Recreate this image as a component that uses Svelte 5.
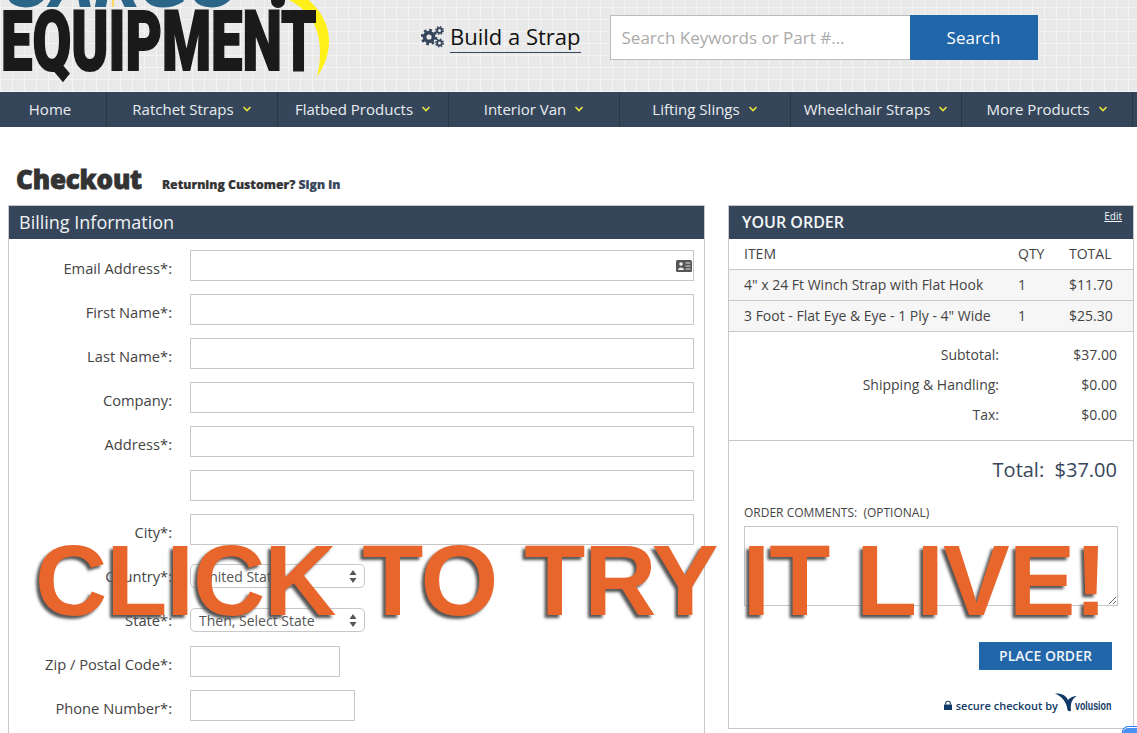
<script lang="ts">
	const navItems = [
		{ label: 'Home', caret: false },
		{ label: 'Ratchet Straps', caret: true },
		{ label: 'Flatbed Products', caret: true },
		{ label: 'Interior Van', caret: true },
		{ label: 'Lifting Slings', caret: true },
		{ label: 'Wheelchair Straps', caret: true },
		{ label: 'More Products', caret: true },
	];

	const cartLines = [
		{ name: '4" x 24 Ft Winch Strap with Flat Hook', qty: 1, total: '$11.70' },
		{ name: '3 Foot - Flat Eye & Eye - 1 Ply - 4" Wide', qty: 1, total: '$25.30' },
	];

	const summary = [
		{ label: 'Subtotal:', value: '$37.00' },
		{ label: 'Shipping & Handling:', value: '$0.00' },
		{ label: 'Tax:', value: '$0.00' },
	];
</script>

<div class="page">
	<header class="top">
		<div class="logo">
			<svg class="swoosh" width="340" height="92" viewBox="0 0 340 92">
				<path d="M285 -2 L306 -2 C322 10 330 28 329 44 C328 58 323 68 317 77 C321 60 322 40 314 24 C308 12 298 4 285 -2 Z" fill="#fff01a" />
				<ellipse cx="278" cy="1" rx="7" ry="7" fill="#1a1a1a" />
				<rect x="112" y="0" width="2" height="7" fill="#ffd860" />
			</svg>
			<span class="cargo">CARGO</span>
			<span class="equipment">EQUIPMENT</span>
		</div>

		<a class="build" href="#build">
			<svg width="24" height="22" viewBox="0 0 24 22" fill="none" stroke="#36465a">
				<circle cx="8" cy="11" r="4.4" stroke-width="3.6" />
				<circle cx="8" cy="11" r="7" stroke-width="2.6" stroke-dasharray="2.75 2.75" />
				<circle cx="18.5" cy="4.5" r="2.4" stroke-width="1.8" />
				<circle cx="18.5" cy="4.5" r="3.7" stroke-width="1.6" stroke-dasharray="1.5 1.4" />
				<circle cx="18.5" cy="17" r="2.4" stroke-width="1.8" />
				<circle cx="18.5" cy="17" r="3.7" stroke-width="1.6" stroke-dasharray="1.5 1.4" />
			</svg>
			<span class="build-text">Build a Strap</span>
		</a>

		<form class="search">
			<input type="text" placeholder="Search Keywords or Part #..." />
			<button type="button">Search</button>
		</form>
	</header>

	<nav class="nav">
		{#each navItems as item}
			<a class="nav-item" class:plain={!item.caret} href="#nav">
				{item.label}
				{#if item.caret}
					<svg width="10" height="6" viewBox="0 0 10 6" fill="none" stroke="#e9e63c" stroke-width="1.6">
						<path d="M1.5 1 L5 4.5 L8.5 1" />
					</svg>
				{/if}
			</a>
		{/each}
	</nav>

	<div class="heading">
		<h1>Checkout</h1>
		<span class="returning">Returning Customer? <a href="#signin">Sign in</a></span>
	</div>

	<main class="columns">
		<section class="panel billing">
			<h2 class="billing-title">Billing Information</h2>
			<div class="fields">
				<label class="row">
					<span>Email Address*:</span>
					<span class="email-wrap">
						<input type="text" />
						<svg class="card" width="16" height="12" viewBox="0 0 16 12">
							<rect width="16" height="12" rx="1.5" fill="#555" />
							<circle cx="5" cy="4" r="1.8" fill="#eee" />
							<path d="M2 10 C2 6.5 8 6.5 8 10 Z" fill="#eee" />
							<path d="M9.5 3h5M9.5 6h5M9.5 9h5" stroke="#ddd" stroke-width="1.2" />
						</svg>
					</span>
				</label>
				<label class="row"><span>First Name*:</span><input type="text" /></label>
				<label class="row"><span>Last Name*:</span><input type="text" /></label>
				<label class="row"><span>Company:</span><input type="text" /></label>
				<label class="row"><span>Address*:</span><input type="text" /></label>
				<label class="row"><span></span><input type="text" /></label>
				<label class="row"><span>City*:</span><input type="text" /></label>
				<div class="row">
					<span>Country*:</span>
					<div class="select">
						United States
						<svg width="8" height="13" viewBox="0 0 8 13" fill="#555"><path d="M4 0 L7.5 5 H0.5 Z M4 13 L7.5 8 H0.5 Z" /></svg>
					</div>
				</div>
				<div class="row">
					<span>State*:</span>
					<div class="select">
						Then, Select State
						<svg width="8" height="13" viewBox="0 0 8 13" fill="#555"><path d="M4 0 L7.5 5 H0.5 Z M4 13 L7.5 8 H0.5 Z" /></svg>
					</div>
				</div>
				<label class="row"><span>Zip / Postal Code*:</span><input class="zip" type="text" /></label>
				<label class="row"><span>Phone Number*:</span><input class="phone" type="text" /></label>
			</div>
		</section>

		<aside class="panel order">
			<div class="order-title">
				<h2>YOUR ORDER</h2>
				<a href="#edit">Edit</a>
			</div>
			<div class="line head">
				<span>ITEM</span><span>QTY</span><span>TOTAL</span>
			</div>
			{#each cartLines as line}
				<div class="line item">
					<span>{line.name}</span><span>{line.qty}</span><span>{line.total}</span>
				</div>
			{/each}

			<div class="summary">
				{#each summary as row}
					<div class="summary-row">
						<span>{row.label}</span><span class="amount">{row.value}</span>
					</div>
				{/each}
			</div>

			<div class="finish">
				<div class="grand">Total:&nbsp; $37.00</div>
				<div class="comments-label">ORDER COMMENTS:&nbsp; (OPTIONAL)</div>
				<textarea></textarea>
				<button type="button" class="place">PLACE ORDER</button>
				<div class="secure">
					<svg width="8" height="10" viewBox="0 0 8 10" fill="#123a66">
						<path d="M0 4.5 H8 V10 H0 Z" />
						<path d="M1.7 4.5 V3 C1.7 0.6 6.3 0.6 6.3 3 V4.5" fill="none" stroke="#123a66" stroke-width="1.1" />
					</svg>
					<span>secure checkout by</span>
					<svg class="vee" width="22" height="19" viewBox="0 0 22 19" fill="#123a66">
						<path d="M0 0.5 C6 0 11 2 13 7 C14.5 5 18 3 22 3 C18 5 15 9 16 18 C14 18.5 13 18 12.5 17 C12 10 7 3 0 0.5 Z" />
					</svg>
					<span class="volusion">volusion</span>
				</div>
			</div>
		</aside>
	</main>

	<div class="cta">CLICK TO TRY IT LIVE!</div>
	<div class="chat"></div>
</div>

<style>
	:global(body) {
		margin: 0;
		background: #fff;
		overflow: hidden;
	}

	.page {
		position: relative;
		width: 1137px;
		height: 733px;
		overflow: hidden;
		font-family: 'Open Sans', 'Liberation Sans', sans-serif;
		font-size: 14px;
		color: #444;
	}

	.top {
		display: flex;
		height: 92px;
		background-color: #e9e9e9;
		background-image:
			repeating-linear-gradient(0deg, #f3f3f3 0 1px, transparent 1px 12px),
			repeating-linear-gradient(90deg, #f3f3f3 0 1px, transparent 1px 12px);
	}

	.logo {
		position: relative;
		width: 340px;
		height: 92px;
		overflow: hidden;
		flex: none;
	}

	.swoosh {
		position: absolute;
		left: 0;
		top: 0;
	}

	.cargo {
		position: absolute;
		left: 4px;
		top: -43px;
		font: italic 900 58px/1 'Liberation Sans', sans-serif;
		letter-spacing: 1px;
		color: #2b6689;
		-webkit-text-stroke: 2px #2b6689;
		transform: scaleX(1.06);
		transform-origin: left top;
	}

	.equipment {
		position: absolute;
		left: 1px;
		top: 2px;
		font: 900 84px/80px 'Roboto', 'Liberation Sans', sans-serif;
		color: #1a1a1a;
		-webkit-text-stroke: 2px #1a1a1a;
		transform: scaleX(0.668);
		transform-origin: left top;
		white-space: nowrap;
	}

	.build {
		display: flex;
		align-items: flex-start;
		gap: 5px;
		margin: 26px 0 0 81px;
		color: #111;
		text-decoration: none;
	}

	.build-text {
		margin-top: -3px;
		font-size: 22px;
		line-height: 26px;
		height: 29px;
		border-bottom: 1px solid #36465a;
		white-space: nowrap;
	}

	.search {
		display: flex;
		height: 45px;
		margin: 15px 0 0 29px;
	}

	.search input {
		width: 300px;
		box-sizing: border-box;
		border: 1px solid #bbb;
		border-right: 0;
		padding: 0 11px;
		background: #fff;
		font: 17px 'Open Sans', sans-serif;
		outline: none;
	}

	.search input::placeholder {
		color: #aaa;
		opacity: 1;
	}

	.search button {
		width: 128px;
		border: 0;
		background: #2166a8;
		color: #fff;
		font: 17px 'Open Sans', sans-serif;
	}

	.nav {
		display: grid;
		grid-template-columns: 107px repeat(6, 171px) 4px;
		height: 35px;
		background: #36465a;
	}

	.nav-item {
		display: flex;
		align-items: center;
		justify-content: center;
		gap: 8px;
		padding-bottom: 2px;
		box-sizing: border-box;
		border-right: 1px solid #2a3748;
		color: #e9edf0;
		font-size: 15px;
		text-decoration: none;
		white-space: nowrap;
	}

	.nav-item.plain {
		padding-right: 6px;
	}

	.heading {
		display: flex;
		align-items: baseline;
		gap: 20px;
		height: 78px;
		box-sizing: border-box;
		padding: 34px 0 0 16px;
	}

	h1 {
		margin: 0;
		font-size: 26px;
		line-height: 36px;
		font-weight: 800;
		color: #333;
		letter-spacing: -0.2px;
		-webkit-text-stroke: 0.8px #333;
	}

	.returning {
		font-size: 12.2px;
		font-weight: 800;
		color: #333;
		-webkit-text-stroke: 0.2px #333;
	}

	.returning a {
		color: #36465a;
		text-decoration: none;
		-webkit-text-stroke: 0.2px #36465a;
	}

	.columns {
		display: flex;
		align-items: flex-start;
		gap: 23px;
		padding-left: 8px;
	}

	.panel {
		box-sizing: border-box;
		border: 1px solid #c8c8c8;
	}

	.billing {
		width: 697px;
		height: 560px;
		flex: none;
	}

	.billing-title {
		margin: 0;
		height: 33px;
		padding-left: 10px;
		background: #36465a;
		color: #f0f2f4;
		font-size: 18px;
		font-weight: 400;
		line-height: 33px;
	}

	.fields {
		padding-top: 11px;
	}

	.row {
		display: grid;
		grid-template-columns: 163px 1fr;
		column-gap: 18px;
		align-items: start;
		height: 44px;
		padding-right: 10px;
	}

	.row > span:first-child {
		text-align: right;
		font-size: 14.7px;
		line-height: 37px;
		white-space: nowrap;
	}

	.row input {
		box-sizing: border-box;
		width: 100%;
		height: 31px;
		border: 1px solid #c8c8c8;
		background: #fff;
		outline: none;
	}

	.row input.zip {
		width: 150px;
	}

	.row input.phone {
		width: 165px;
	}

	.email-wrap {
		position: relative;
		display: block;
	}

	.card {
		position: absolute;
		right: 2px;
		top: 10px;
	}

	.select {
		display: flex;
		align-items: center;
		justify-content: space-between;
		box-sizing: border-box;
		width: 175px;
		height: 24px;
		margin-top: 6px;
		padding: 0 7px 0 8px;
		border: 1px solid #c8c8c8;
		border-radius: 5px;
		background: #fff;
		color: #555;
		font-size: 14px;
	}

	.order {
		width: 406px;
		height: 524px;
		flex: none;
	}

	.order-title {
		position: relative;
		height: 33px;
		padding-left: 13px;
		background: #36465a;
		color: #f4f6f7;
	}

	.order-title h2 {
		margin: 0;
		font-size: 16px;
		font-weight: 600;
		line-height: 33px;
	}

	.order-title a {
		position: absolute;
		right: 11px;
		top: 3px;
		color: #f4f6f7;
		font-size: 10px;
	}

	.line {
		display: grid;
		grid-template-columns: 274px 51px 1fr;
		padding-left: 15px;
		box-sizing: border-box;
		height: 31px;
		line-height: 29px;
		border-bottom: 1px solid #c8c8c8;
		white-space: nowrap;
	}

	.line.item {
		background: #f6f6f6;
	}

	.line.item:last-of-type {
		border-bottom-width: 2px;
	}

	.summary {
		display: flex;
		flex-direction: column;
		gap: 10px;
		height: 109px;
		box-sizing: border-box;
		padding: 13px 16px 0 0;
		border-bottom: 1px solid #c8c8c8;
	}

	.summary-row {
		display: flex;
		justify-content: flex-end;
		line-height: 20px;
	}

	.amount {
		width: 118px;
		text-align: right;
	}

	.finish {
		display: flex;
		flex-direction: column;
		padding: 15px 16px 0 15px;
	}

	.grand {
		text-align: right;
		font-size: 20px;
		line-height: 28px;
		color: #36465a;
	}

	.comments-label {
		margin-top: 20px;
		font-size: 12px;
		line-height: 18px;
	}

	textarea {
		box-sizing: border-box;
		width: 374px;
		height: 80px;
		margin: 4px 0 0;
		border: 1px solid #c8c8c8;
		background: #fff;
		outline: none;
		display: block;
	}

	.place {
		align-self: flex-end;
		width: 133px;
		height: 28px;
		margin: 36px 5px 0 0;
		padding: 0 0 2px;
		border: 0;
		background: #2166a8;
		color: #f0f4f8;
		font: 600 14px 'Open Sans', sans-serif;
	}

	.secure {
		display: flex;
		align-items: center;
		justify-content: flex-end;
		gap: 4px;
		height: 20px;
		margin: 25px 5px 0 0;
		color: #123a66;
		font-size: 11px;
		font-weight: 600;
		white-space: nowrap;
	}

	.vee {
		margin: -6px -6px 0 -7px;
	}

	.volusion {
		font: bold 13px 'Liberation Sans', sans-serif;
		display: inline-block;
		width: 37px;
		transform: scaleX(0.68);
		transform-origin: left center;
	}

	.cta {
		position: absolute;
		left: 35px;
		top: 523px;
		font: bold 100px/115px 'Liberation Sans', sans-serif;
		letter-spacing: -1px;
		color: #e8652c;
		text-shadow: -3px 3px 3px #555;
		white-space: nowrap;
	}

	.chat {
		position: absolute;
		left: 1122px;
		top: 726px;
		width: 30px;
		height: 20px;
		border: 1px solid #2f7df0;
		border-radius: 6px;
		background: #4a90f5;
		box-shadow: inset 0 1px 0 #fff;
	}
</style>
